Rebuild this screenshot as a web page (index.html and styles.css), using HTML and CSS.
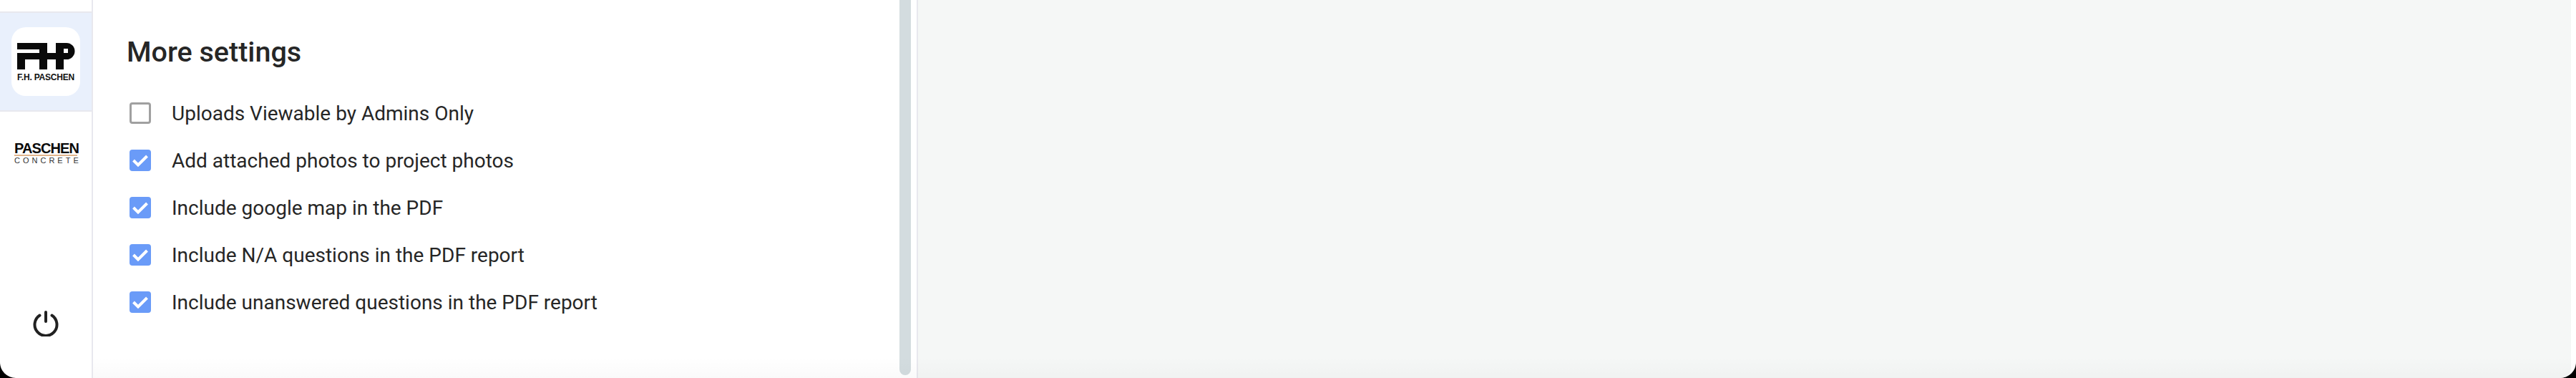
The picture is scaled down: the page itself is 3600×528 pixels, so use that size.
FILE: index.html
```html
<!DOCTYPE html>
<html lang="en">
<head>
    <meta charset="UTF-8">
    <meta name="viewport" content="width=device-width, initial-scale=1.0">
    <title>More settings</title>
    <link rel="stylesheet" href="styles.css">
</head>
<body>

    <div class="app">
        <div class="sidebar">
            <div class="org-stub"></div>
            <div class="org org-active">
                <div class="logo-card">
                    <svg class="fhp-mark" viewBox="0 0 81 37" width="81" height="37">
                        <path d="M0 0H42V37H31V23H11V37H0V14H31V9H0Z"/>
                        <path d="M31 14H54V0H69A11.500 11.500 0 0 1 69 23H65V37H54V23H31Z"/>
                        <rect x="65" y="8" width="6" height="6" fill="#fff"/>
                    </svg>
                    <div class="fhp-name">F.H. PASCHEN</div>
                </div>
            </div>
            <div class="org">
                <div class="concrete-logo">
                    <div class="concrete-name">PASCHEN</div>
                    <div class="concrete-sub">CONCRETE</div>
                </div>
            </div>
            <button class="power-btn">
                <svg viewBox="0 0 36 36" width="36" height="36" fill="none" stroke="#212121" stroke-width="4" stroke-linecap="round">
                    <path d="M18 2V15"/>
                    <path d="M9.500 6.500A15.500 15.500 0 1 0 26.500 6.500"/>
                </svg>
            </button>
        </div>

        <div class="settings-pane">
            <div class="settings">
                <h2>More settings</h2>
                <div class="check-row">
                    <span class="box"></span>
                    <span>Uploads Viewable by Admins Only</span>
                </div>
                <div class="check-row">
                    <span class="box checked"><svg viewBox="0 0 30 30" width="30" height="30" fill="none" stroke="#fff" stroke-width="4"><path d="M5.500 15L12 21.500L24.500 9"/></svg></span>
                    <span>Add attached photos to project photos</span>
                </div>
                <div class="check-row">
                    <span class="box checked"><svg viewBox="0 0 30 30" width="30" height="30" fill="none" stroke="#fff" stroke-width="4"><path d="M5.500 15L12 21.500L24.500 9"/></svg></span>
                    <span>Include google map in the PDF</span>
                </div>
                <div class="check-row">
                    <span class="box checked"><svg viewBox="0 0 30 30" width="30" height="30" fill="none" stroke="#fff" stroke-width="4"><path d="M5.500 15L12 21.500L24.500 9"/></svg></span>
                    <span>Include N/A questions in the PDF report</span>
                </div>
                <div class="check-row">
                    <span class="box checked"><svg viewBox="0 0 30 30" width="30" height="30" fill="none" stroke="#fff" stroke-width="4"><path d="M5.500 15L12 21.500L24.500 9"/></svg></span>
                    <span>Include unanswered questions in the PDF report</span>
                </div>
            </div>
            <div class="scroll-thumb"></div>
        </div>

        <div class="canvas-pane"></div>
    </div>

</body>
</html>
```
FILE: styles.css
```css
* {
    box-sizing: border-box;
    margin: 0;
    padding: 0;
}
body {
    height: 528px;
    background: #000;
    overflow: hidden;
    font-family: 'Roboto', sans-serif;
    color: #262626;
}
.app {
    display: flex;
    position: relative;
    height: 528px;
    padding-right: 7px;
    background: #fff;
    border-radius: 0 0 22px 22px;
    overflow: hidden;
}
/* soft fade along the bottom edge */
.app::after {
    content: "";
    position: absolute;
    left: 130px;
    right: 0;
    bottom: 0;
    height: 30px;
    background: linear-gradient(to bottom, rgba(0, 0, 0, 0), rgba(0, 0, 0, 0.02));
    pointer-events: none;
}
.sidebar {
    display: flex;
    flex-direction: column;
    flex: 0 0 130px;
    border-right: 2px solid #e8e8ee;
}
.org-stub {
    height: 18px;
    border-bottom: 2px solid #e8e8ee;
}
.org {
    display: flex;
    justify-content: center;
    align-items: center;
    height: 115px;
}
.org-active {
    height: 138px;
    background: #e9f0fc;
    border-bottom: 2px solid #e8e8ee;
}
.logo-card {
    display: flex;
    flex-direction: column;
    align-items: center;
    width: 96px;
    height: 96px;
    padding-top: 22px;
    background: #fff;
    border-radius: 20px;
}
.fhp-mark {
    display: block;
    fill: #0a0a0a;
}
.fhp-name {
    margin-top: 6px;
    font-family: 'Liberation Sans', sans-serif;
    font-size: 12px;
    font-weight: bold;
    line-height: 10px;
    letter-spacing: -0.22px;
    white-space: nowrap;
    color: #111;
}
.concrete-logo {
    width: 88px;
}
.concrete-name {
    height: 20px;
    font-family: 'Liberation Sans', sans-serif;
    font-size: 20px;
    font-weight: bold;
    line-height: 18px;
    letter-spacing: -0.9px;
    white-space: nowrap;
    color: #0a0a0a;
    border-bottom: 2px solid #e0b48c;
}
.concrete-sub {
    margin-top: 1px;
    font-family: 'Liberation Sans', sans-serif;
    font-size: 11px;
    line-height: 10px;
    letter-spacing: 4px;
    white-space: nowrap;
    color: #333;
}
.power-btn {
    display: flex;
    justify-content: center;
    margin-top: auto;
    margin-bottom: 58px;
    background: transparent;
    border: none;
}
.settings-pane {
    display: flex;
    flex: 0 0 1153px;
    border-right: 2px solid #e8e8ee;
}
.settings {
    flex: 1;
    padding: 50px 0 0 47px;
}
h2 {
    height: 42px;
    margin-bottom: 33px;
    font-size: 39.5px;
    font-weight: 500;
    line-height: 46px;
    color: #262626;
}
.check-row {
    display: flex;
    align-items: center;
    gap: 29px;
    height: 66px;
    padding-left: 4px;
    font-size: 28px;
}
.box {
    flex: 0 0 30px;
    height: 30px;
    background: #fff;
    border: 3px solid #a0a0a0;
    border-radius: 4px;
}
.box.checked {
    background: #6a9bf8;
    border: none;
}
.box svg {
    display: block;
}
.scroll-thumb {
    flex: 0 0 16px;
    margin: 0 8px 4px 0;
    background: #d3dcdf;
    border-radius: 0 0 8px 8px;
}
.canvas-pane {
    flex: 1;
    background: #f5f7f6;
    border-bottom-right-radius: 14px;
}
```
